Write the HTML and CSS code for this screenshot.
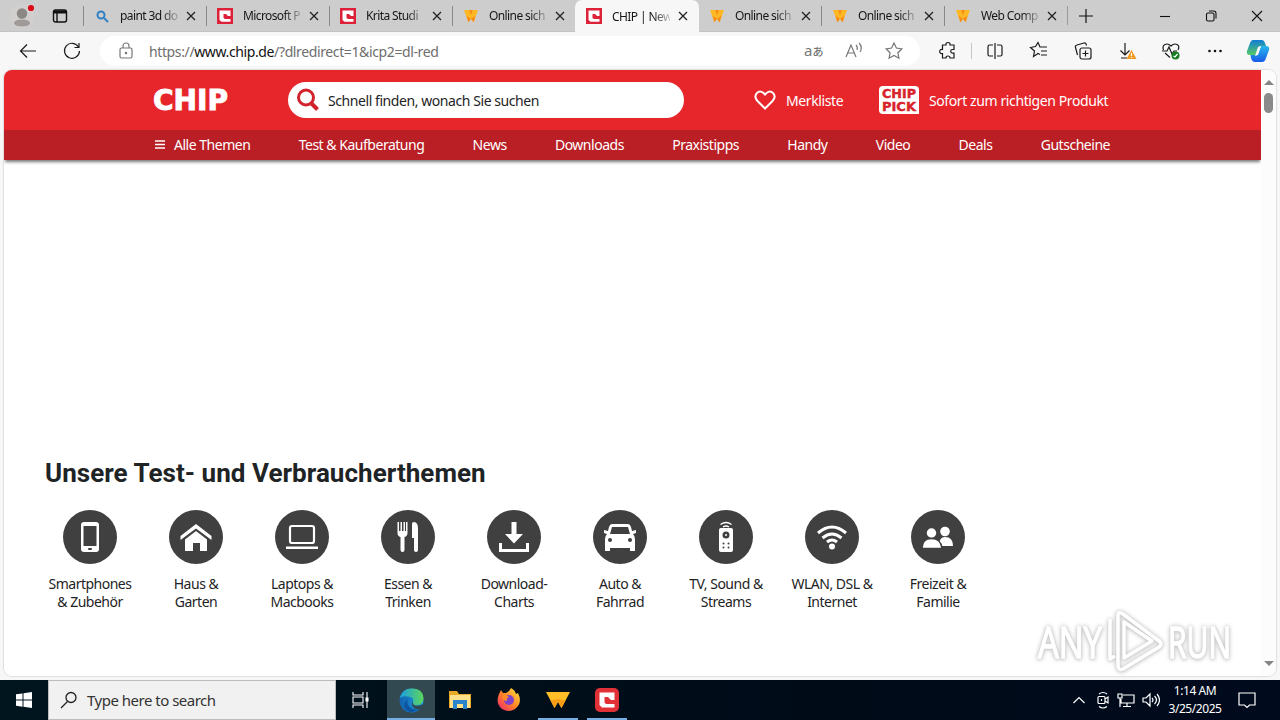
FILE: index.html
```html
<!DOCTYPE html>
<html lang="de">
<head>
<meta charset="utf-8">
<title>CHIP | News</title>
<link rel="stylesheet" href="styles.css">
</head>
<body>
<svg class="defs" aria-hidden="true">
  <symbol id="chip" viewBox="0 0 16 16"><path fill="#dc2138" d="M0 0h16v16H0z"/><path fill="#fff" d="M2.500 2.500h11v5.500H11L9 6H6.500v4L8 11h5.500v2.700H4.500L2.500 12z"/></symbol>
  <symbol id="wolf" viewBox="0 0 16 16"><path fill="#ffb824" d="M0 1h16l-5 14-3-4-3 4z"/><path fill="#f68b16" d="M3 8l2 7 3-4zM13 8l-2 7-3-4zM6 1h4L8 7z"/></symbol>
  <symbol id="close" viewBox="0 0 12 12"><path d="M2 2l8 8M10 2l-8 8" stroke="#222" stroke-width="1.300"/></symbol>
</svg>
<div class="browser">
  <header class="tabs">
    <div class="tools">
      <svg width="26" height="26" viewBox="0 0 26 26"><circle cx="13" cy="13" r="12" fill="#d2d0cf"/><circle cx="13" cy="10.500" r="5.200" fill="#8b8785"/><path d="M5 20.500q0-4 8-4t8 4q-1 3-8 3t-8-3z" fill="#a09b98"/><circle cx="22" cy="5" r="3.100" fill="#dc0a17"/></svg>
      <svg width="16" height="16" viewBox="0 0 16 16" fill="none" stroke="#111" stroke-width="1.400"><rect x="1.500" y="2" width="13" height="12" rx="2"/><path d="M2 4h12" stroke-width="3"/><path d="M5 4v10"/></svg>
    </div>
    <div class="tab"><svg class="fav" viewBox="0 0 16 16" fill="none" stroke="#3280c4" stroke-width="2"><circle cx="7" cy="7" r="3.500"/><path d="M10 10l4 4"/></svg><span>paint 3d do</span><svg class="x"><use href="#close"/></svg></div>
    <div class="tab"><svg class="fav"><use href="#chip"/></svg><span>Microsoft P</span><svg class="x"><use href="#close"/></svg></div>
    <div class="tab"><svg class="fav"><use href="#chip"/></svg><span>Krita Studi</span><svg class="x"><use href="#close"/></svg></div>
    <div class="tab before"><svg class="fav small"><use href="#wolf"/></svg><span>Online sich</span><svg class="x"><use href="#close"/></svg></div>
    <div class="tab active"><svg class="fav"><use href="#chip"/></svg><span>CHIP | New</span><svg class="x"><use href="#close"/></svg></div>
    <div class="tab after"><svg class="fav small"><use href="#wolf"/></svg><span>Online sich</span><svg class="x"><use href="#close"/></svg></div>
    <div class="tab"><svg class="fav small"><use href="#wolf"/></svg><span>Online sich</span><svg class="x"><use href="#close"/></svg></div>
    <div class="tab"><svg class="fav small"><use href="#wolf"/></svg><span>Web Comp</span><svg class="x"><use href="#close"/></svg></div>
    <div class="newtab"><svg width="14" height="14" viewBox="0 0 14 14" stroke="#111" stroke-width="1.200"><path d="M7 0v14M0 7h14"/></svg></div>
    <div class="window">
      <svg viewBox="0 0 12 12"><path d="M1 6.500h10"/></svg>
      <svg viewBox="0 0 12 12"><rect x="1.500" y="3" width="7.500" height="8" rx="1.500"/><path d="M4 1h4.500Q11 1 11 3.500V8.500"/></svg>
      <svg viewBox="0 0 12 12"><path d="M1 1l10 10M11 1L1 11"/></svg>
    </div>
  </header>
  <div class="toolbar">
    <div class="navicons">
      <svg class="ic" viewBox="0 0 20 20"><path d="M18 10H2.500M9 3.500L2.500 10 9 16.500"/></svg>
      <svg class="ic" viewBox="0 0 20 20"><path d="M16.500 6A7.500 7.500 0 1 0 17.500 10M17 2v4.500h-4.500"/></svg>
    </div>
    <div class="address">
      <svg class="ic gray lock" viewBox="0 0 20 20"><rect x="4" y="7" width="12" height="10" rx="1.500"/><path d="M7 7V5a3 3 0 0 1 6 0v2"/><circle cx="10" cy="12" r=".7"/></svg>
      <div class="url">https://<b>www.chip.de</b>/?dlredirect=1&amp;icp2=dl-red</div>
      <div class="addricons">
        <div class="trans">a<small>あ</small></div>
        <svg class="ic gray" viewBox="0 0 20 20"><path d="M2 16L7 4l5 12M4 12h6M12 4q2 2 1 5M15 2q4 4 1 9"/></svg>
        <svg class="ic gray" viewBox="0 0 20 20"><path d="M10 2l2.400 5 5.500.8-4 3.900 1 5.500-4.900-2.700-4.900 2.700 1-5.500-4-3.900 5.500-.8z"/></svg>
      </div>
    </div>
    <div class="actions">
      <svg class="ic" viewBox="0 0 20 20"><path d="M4.500 4H8q-.4-2.500 2-2.500T12 4h4v4.500h-1.500a1.800 1.800 0 0 0 0 3.600H16V17h-4q0-2-2-2t-2 2H4.500v-4.500q-2.800.3-2.800-2t2.800-2z"/></svg>
      <i class="divider"></i>
      <svg class="ic" viewBox="0 0 20 20"><path d="M8 4H4.500Q3 4 3 5.500v8Q3 15 4.500 15H8M10 2v16M12 4h3.500Q17 4 17 5.500v8q0 1.500-1.500 1.500H12"/></svg>
      <svg class="ic" viewBox="0 0 20 20"><path d="M11 13.500l-2-1-4.500 3 1-5.500-4-3.500 5-1L9 1.500 11 6h7M12 10h6M12 14h6"/></svg>
      <svg class="ic" viewBox="0 0 20 20"><rect x="7" y="7" width="11" height="11" rx="2"/><path d="M12.500 9.500v6M9.500 12.500h6M4.500 14L2.500 6.500Q2 4.500 4 4l7-2q2-.5 2.500 2.500"/></svg>
      <svg class="ic" viewBox="0 0 20 20"><path d="M8 2v12M3.500 9.500L8 14l4.500-4.500M4 17h6"/><path d="M14.500 9l5 9h-10z" fill="#f39a1e" stroke="none"/><path d="M14.500 12v3M14.500 16v1" stroke="#fff"/></svg>
      <svg class="ic" viewBox="0 0 20 20"><path d="M2.500 9Q1 5 4 3.500T10 5q3-3 6-1.500T17 9M1 10h5l2-4 3 7 2-3h3M4 12l5 4.500"/><circle cx="14.500" cy="14.500" r="4" fill="#1a7b25" stroke="none"/><path d="M12.500 15l1.500 1 2.500-3" stroke="#fff"/></svg>
      <svg class="ic" viewBox="0 0 20 20"><g fill="#111" stroke="none"><circle cx="4.500" cy="10" r="1.300"/><circle cx="10" cy="10" r="1.300"/><circle cx="15.500" cy="10" r="1.300"/></g></svg>
    </div>
    <svg class="copilot" viewBox="0 0 24 24"><defs><linearGradient id="cp1" x2="0" y2="1"><stop stop-color="#117cd5"/><stop offset="1" stop-color="#57cb65"/></linearGradient><linearGradient id="cp2" x2="0" y2="1"><stop stop-color="#29b8ed"/><stop offset="1" stop-color="#175be8"/></linearGradient></defs><path fill="url(#cp1)" d="M7 1h9q2 0 3 3l1 3h-5q-2 0-3 3l-2 6H4q-4 0-3-4L4 4q1-3 3-3z"/><path fill="url(#cp2)" d="M15 7h5q4 0 3 4l-3 8q-1 4-4 4H9q-3 0-4-4l-.5-3H10q2 0 3-4z"/><path d="M12 8l3-1-3 9-3 1z" fill="#f7f7f7"/></svg>
  </div>
  <main class="view">
    <div class="page">
      <div class="top">
        <svg class="logo" viewBox="0 0 76 22"><text x="0" y="20.500" textLength="75" lengthAdjust="spacingAndGlyphs">CHIP</text></svg>
        <div class="search"><svg viewBox="0 0 24 24"><circle cx="10" cy="9.500" r="7.500"/><path d="M15.500 15.500l6 6" stroke-width="4"/></svg><span>Schnell finden, wonach Sie suchen</span></div>
        <div class="merk"><svg viewBox="0 0 22 20"><path d="M11 18.500L3.500 11Q-.5 6.500 3 3t8 1.500Q15.500-.5 19 3t-.5 8z"/></svg><span>Merkliste</span></div>
        <div class="pick"><svg viewBox="0 0 40 28"><path d="M4 0h32q4 0 4 4v24H4q-4 0-4-4V4q0-4 4-4z" fill="#fff"/><text x="3" y="12.400" textLength="34" lengthAdjust="spacingAndGlyphs">CHIP</text><text x="3" y="24.600" textLength="34" lengthAdjust="spacingAndGlyphs">PICK</text></svg><span>Sofort zum richtigen Produkt</span></div>
      </div>
      <nav class="menu">
        <a><svg viewBox="0 0 10 9"><path d="M0 1h10M0 4.500h10M0 8h10" stroke="#fff" stroke-width="1.400"/></svg>Alle Themen</a><a>Test &amp; Kaufberatung</a><a>News</a><a>Downloads</a><a>Praxistipps</a><a>Handy</a><a>Video</a><a>Deals</a><a>Gutscheine</a>
      </nav>
      <section class="themes">
        <h1>Unsere Test- und Verbraucherthemen</h1>
        <div class="cats">
          <div class="cat"><svg viewBox="0 0 54 54"><rect x="18" y="12" width="18" height="30" rx="3"/><path class="d" d="M20.500 16h13v20h-13z"/><rect class="d" x="25" y="38" width="4" height="2" rx="1"/></svg><p>Smartphones<br>&amp; Zubehör</p></div>
          <div class="cat"><svg viewBox="0 0 54 54"><path d="M27 14l15.500 12v4L27 18.500 11.500 30v-4z"/><path d="M27 21l11 8.500V41h-7v-8h-7v8h-8V29.500z"/></svg><p>Haus &amp;<br>Garten</p></div>
          <div class="cat"><svg viewBox="0 0 54 54"><rect x="15" y="16" width="24" height="17" rx="2" fill="none" stroke="#fff" stroke-width="2.200"/><path d="M11 36.500h32V39H11z"/></svg><p>Laptops &amp;<br>Macbooks</p></div>
          <div class="cat"><svg viewBox="0 0 54 54"><path d="M16.500 12H18v9h1.500v-9h1.500v9h1.500v-9H24v9h1v-9h1.500v11q0 3-3 4v13q0 2-2 2t-2-2V27q-3-1-3-4zM31 14q0-2 2-2 4 0 4 7v21q0 2-2 2t-2-2V28h-2z"/></svg><p>Essen &amp;<br>Trinken</p></div>
          <div class="cat"><svg viewBox="0 0 54 54"><path d="M24.500 12h5v12H36l-9 9.500L18 24h6.500zM12 33h3v6h24v-6h3v9H12z"/></svg><p>Download-<br>Charts</p></div>
          <div class="cat"><svg viewBox="0 0 54 54"><path d="M19 14h16q2 0 3 3l1 4 4-1v3l-3 1q2 2 2 5v12h-5v-3H17v3h-5V29q0-3 2-5l-3-1v-3l4 1 1-4q1-3 3-3z"/><path class="d" d="M19 17h16l2 7H17z"/><circle class="d" cx="17" cy="30" r="2"/><circle class="d" cx="37" cy="30" r="2"/></svg><p>Auto &amp;<br>Fahrrad</p></div>
          <div class="cat"><svg viewBox="0 0 54 54"><rect x="20" y="18" width="14" height="24" rx="2"/><path d="M21.500 14.500q5.500-4 11 0M24 17q3-2 6 0" fill="none" stroke="#fff" stroke-width="1.300"/><circle class="d" cx="27" cy="25" r="3.500"/><circle cx="27" cy="25" r="1"/><g class="d"><circle cx="24.500" cy="33.500" r="1"/><circle cx="29.500" cy="33.500" r="1"/><circle cx="24.500" cy="37.500" r="1"/><circle cx="29.500" cy="37.500" r="1"/></g></svg><p>TV, Sound &amp;<br>Streams</p></div>
          <div class="cat"><svg viewBox="0 0 54 54"><path d="M13 23q14-12 28 0M17.500 28q9.500-8 19 0M22 32q5-4 10 0" fill="none" stroke="#fff" stroke-width="3"/><circle cx="27" cy="36.500" r="3"/></svg><p>WLAN, DSL &amp;<br>Internet</p></div>
          <div class="cat"><svg viewBox="0 0 54 54"><circle cx="34" cy="21.500" r="4.800"/><path d="M28 36q0-9 6-9 8 0 8 9z"/><g stroke="#404040" stroke-width="1.500"><circle cx="20.500" cy="23" r="5.500"/><path d="M11 38.500q0-10 9.500-10T31 38.500z"/></g></svg><p>Freizeit &amp;<br>Familie</p></div>
        </div>
      </section>
    </div>
    <div class="scroll"><svg width="10" height="6" viewBox="0 0 10 6"><path d="M0 6l5-5 5 5z" fill="#858585"/></svg><i></i><svg class="down" width="10" height="6" viewBox="0 0 10 6"><path d="M0 0l5 5 5-5z" fill="#858585"/></svg></div>
  </main>
  <svg class="mark" viewBox="0 0 210 70"><g class="word"><text x="8" y="53" textLength="64" lengthAdjust="spacingAndGlyphs">ANY</text><text x="138" y="53" textLength="63" lengthAdjust="spacingAndGlyphs">RUN</text></g><g fill="none" stroke="#fff" stroke-width="3.500" stroke-linejoin="round"><path d="M80 14v40l5-3M88 10v50q0 6 5 4l36-22q4-3 0-6L93 9q-5-3-5 1zM94 17v36l28-17z"/></g></svg>
</div>
<footer class="taskbar">
  <div class="start"><svg width="16" height="16" viewBox="0 0 16 16"><path fill="#fff" d="M0 2.300L6.500 1.400V7.500H0zM7.500 1.200L16 0v7.500H7.500zM0 8.500h6.500v6.200L0 13.800zM7.500 8.500H16V16l-8.500-1.200z"/></svg></div>
  <div class="find"><svg width="18" height="18" viewBox="0 0 18 18" fill="none" stroke="#222" stroke-width="1.300"><circle cx="11" cy="6.500" r="5"/><path d="M7.500 10.500L1 17"/></svg><span>Type here to search</span></div>
  <div class="app view-app"><svg width="18" height="18" viewBox="0 0 18 18" fill="none" stroke="#fff" stroke-width="1.100"><path d="M2 1v3h10V1M2 17v-3h10v3M2 6h10v6H2zM16 1v16M15 7h2v3h-2z"/></svg></div>
  <div class="app open on"><svg width="25" height="25" viewBox="0 0 24 24"><defs><linearGradient id="e1"><stop stop-color="#1b9de2"/><stop offset="1" stop-color="#5bd65c"/></linearGradient><linearGradient id="e2"><stop stop-color="#1263ad"/><stop offset="1" stop-color="#1d9ee5"/></linearGradient></defs><circle cx="12" cy="12" r="11.500" fill="url(#e2)"/><path d="M.6 10Q3 .5 12 .5q11 0 11.500 9 0 7-7 7-4 0-3-3 1-4-3.500-5Q4 7 .6 10z" fill="url(#e1)"/><path d="M9 10q-3 5 2 9 5 3 9 1-5 5-12 2Q1 17 9 10z" fill="#0d55a0"/><path d="M13.500 13q-1 4 4 4 3 0 6.500-2v5l-3 .5q-7 .5-8.500-4-.5-2 1-3.500z" fill="#334952"/></svg></div>
  <div class="app"><svg width="22" height="20" viewBox="0 0 22 20"><path fill="#e8a928" d="M0 1h8l2 3h12v14H0z"/><path fill="#ffe08a" d="M1 5h20v13H1z"/><path fill="#2983cd" d="M4 10h14v9h-4v-5H8v5H4z"/></svg></div>
  <div class="app"><svg width="24" height="24" viewBox="0 0 24 24"><defs><linearGradient id="ff" x1="1" x2="0" y2="1"><stop stop-color="#ffe944"/><stop offset=".5" stop-color="#ff8525"/><stop offset="1" stop-color="#ed1f77"/></linearGradient></defs><path fill="url(#ff)" d="M2 6l2-4 2 3h3l3-2 2-3q4 2 5 6l2-1q5 10-3 16-6 4-13 0Q-2 15 2 6z"/><circle cx="12" cy="12" r="5" fill="#8142ca"/><path d="M5 8q4-2 7 1-3 1-2 4-4 0-5-5z" fill="#ff8d25"/></svg></div>
  <div class="app open"><svg width="24" height="20" viewBox="0 0 24 20"><path fill="#ffbd27" d="M0 2h24l-8.500 16-3.500-6-3.500 6z"/><path d="M4.500 10.500L12 9l7.500 1.500-4 7.500-3.500-6-3.500 6z" fill="#f99d16"/></svg></div>
  <div class="app open"><svg width="24" height="24" viewBox="0 0 24 24"><rect width="24" height="24" rx="5" fill="#e23136"/><path fill="#fff" d="M4.500 4.500h15V12H16l-3-3H9.500v5.500L11 16h8.500v3.500H7L4.500 17z"/></svg></div>
  <div class="tray">
    <svg width="12" height="18" viewBox="0 0 12 18"><path d="M.5 12L6 6.500l5.500 5.500"/></svg>
    <svg class="cam" width="14" height="18" viewBox="0 0 14 18"><rect x="2" y="5.500" width="7" height="7" rx="1"/><path d="M9 8l3-2v6l-3-2M3 3q4-3 8 0M3 15.500q4 3 8 0M5.500 8v2"/></svg>
    <svg width="18" height="18" viewBox="0 0 18 18"><path d="M6 4h11v8H4V8M10 12v3M6 15.500h8M1 3h4v4H1zM3 7v9"/></svg>
    <svg width="18" height="18" viewBox="0 0 18 18"><path d="M1 7h3l4-4v12l-4-4H1zM10 7q2 2 0 4M12.500 5q4 4 0 8M15 3q5 6 0 12"/></svg>
    <div class="clock">1:14 AM<br>3/25/2025</div>
    <svg class="note" width="18" height="18" viewBox="0 0 18 18"><path d="M1 2h16v12h-5.500L9 16.500 6.500 14H1z"/></svg>
  </div>
</footer>
</body>
</html>
```
FILE: styles.css
```css
* { box-sizing: border-box; }
body { margin: 0; width: 1280px; height: 720px; overflow: hidden; font-family: "Noto Sans", "Noto Sans CJK JP", sans-serif; display: flex; flex-direction: column; }
svg { display: block; flex: none; }
.defs { position: absolute; width: 0; height: 0; }
.browser { position: relative; height: 680px; background: #f7f7f7; display: flex; flex-direction: column; }
.tabs { height: 32px; flex: none; background: #cdcdcd; display: flex; border-bottom: 1px solid #c3c3c3; }
.tools { width: 83px; display: flex; align-items: center; padding-left: 9px; gap: 17px; }
.tab { width: 123px; flex: none; display: flex; align-items: center; padding-left: 11px; position: relative; font-size: 12px; letter-spacing: -.6px; color: #161616; }
.tab::before { content: ""; position: absolute; left: 0; top: 6px; width: 1px; height: 20px; background: #898989; }
.tab.active::before, .tab.after::before { display: none; }
.tab span { width: 58px; margin-left: 10px; white-space: nowrap; -webkit-mask-image: linear-gradient(90deg, #000 70%, #0003); mask-image: linear-gradient(90deg, #000 70%, #0003); }
.fav { width: 16px; height: 16px; }
.fav.small { width: 14px; height: 14px; margin: 0 1px; }
.x { width: 12px; height: 12px; margin-left: 7px; }
.tab.active { width: 124px; height: 32px; background: #f7f7f7; border-radius: 7px 7px 0 0; }
.tab.after { width: 122px; padding-left: 10px; }
.newtab { width: 36px; display: flex; align-items: center; justify-content: center; border-left: 1px solid #999; margin: 6px 0; }
.window { margin-left: auto; display: flex; align-items: center; gap: 34px; padding-right: 17px; }
.window svg { width: 12px; height: 12px; fill: none; stroke: #111; stroke-width: 1.100; }
.toolbar { height: 38px; flex: none; display: flex; align-items: center; }
.ic { width: 20px; height: 20px; fill: none; stroke: #1b1b1b; stroke-width: 1.200; }
.gray { stroke: #777; }
.navicons { width: 100px; display: flex; gap: 24px; padding-left: 18px; }
.address { width: 820px; height: 30px; background: #fff; border-radius: 15px; display: flex; align-items: center; padding: 0 16px; }
.url { margin-left: 13px; font-size: 14px; color: #6e6e6e; letter-spacing: -.38px; }
.url b { color: #111; font-weight: 400; }
.addricons { margin-left: auto; display: flex; gap: 20px; align-items: center; }
.trans { width: 20px; color: #777; font-size: 15px; line-height: 18px; white-space: nowrap; display: flex; align-items: baseline; }
.trans small { font-size: 11px; font-weight: 500; }
.actions { display: flex; align-items: center; gap: 24px; padding-left: 18px; }
.divider { width: 1px; height: 16px; background: #c7c7c7; margin: 0 -11px; }
.copilot { width: 24px; height: 24px; margin-left: 21px; }
.view { width: 1272px; height: 606px; margin-left: 4px; background: #fff; border-radius: 8px; overflow: hidden; display: flex; box-shadow: 0 0 1px 1px #dfdfdf; }
.page { width: 1257px; color: #1e2425; }
.top { height: 60px; background: #e7262c; color: #fff; display: flex; align-items: center; padding-left: 149px; font-size: 14px; white-space: nowrap; letter-spacing: -.4px; }
.logo { width: 76px; height: 22px; letter-spacing: 0; overflow: visible; }
.logo text { font: 700 27.500px "DejaVu Sans", sans-serif; fill: #fff; stroke: #fff; stroke-width: .9; }
.search { width: 396px; height: 36px; margin-left: 59px; border-radius: 18px; background: #fff; color: #1e2425; display: flex; align-items: center; gap: 8px; padding-left: 8px; }
.search svg { width: 24px; height: 24px; fill: none; stroke: #d2232c; stroke-width: 3; }
.search span { letter-spacing: -.43px; }
.merk { display: flex; align-items: center; gap: 10px; width: 125px; margin-left: 70px; }
.merk svg { width: 22px; height: 20px; fill: none; stroke: #fff; stroke-width: 2; }
.pick { display: flex; align-items: center; gap: 10px; }
.pick svg { width: 40px; height: 28px; letter-spacing: 0; }
.pick text { font: 700 12px/12px "DejaVu Sans", sans-serif; fill: #d8222c; stroke: #d8222c; stroke-width: .4; }
.menu { height: 30px; background: #ba1f26; color: #fff; display: flex; align-items: center; justify-content: space-between; padding: 0 151px 1px; font-size: 14px; letter-spacing: -.48px; box-shadow: 0 3px 3px -1px #0008; white-space: nowrap; }
.menu a { display: flex; align-items: center; }
.menu svg { width: 10px; height: 9px; margin-right: 9px; }
.themes { padding: 292px 0 0 33px; }
.themes h1 { margin: 0 0 0 8px; font-family: Roboto, sans-serif; font-size: 26px; line-height: 42px; font-weight: 700; letter-spacing: .04px; white-space: nowrap; }
.cats { display: flex; margin-top: 16px; }
.cat { width: 106px; display: flex; flex-direction: column; align-items: center; text-align: center; font-size: 14px; line-height: 18px; }
.cat svg { width: 54px; height: 54px; border-radius: 50%; background: #404040; fill: #fff; }
.cat .d { fill: #404040; }
.cat p { margin: 11px 0 0; white-space: nowrap; letter-spacing: -.5px; }
.scroll { width: 15px; background: #fcfcfc; display: flex; flex-direction: column; align-items: center; padding: 9px 0; }
.scroll i { width: 9px; height: 20px; border-radius: 5px; background: #8a8a8a; margin-top: 8px; }
.scroll .down { margin-top: auto; }
.mark { position: absolute; left: 1030px; top: 605px; width: 210px; height: 70px; overflow: visible; opacity: .7; filter: drop-shadow(0 0 2px #aaa) drop-shadow(0 1px 1px #ccc); }
.word { font: 400 43px "Open Sans", sans-serif; fill: #fff; stroke: #fff; stroke-width: 1.500; }
.taskbar { height: 40px; background: linear-gradient(90deg, #00151e, #000b18 65%, #000a1d); display: flex; color: #fff; }
.start, .app { width: 48px; display: flex; align-items: center; justify-content: center; }
.find { width: 288px; background: #f1f1f1; border: 1px solid #bcbcbc; display: flex; align-items: center; gap: 9px; padding-left: 11px; font-size: 15px; color: #333; letter-spacing: -.5px; }
.app { margin-right: 1px; }
.app.view-app { margin-right: 3px; }
.app.open { box-shadow: inset 0 -2px #76aee2; border: solid transparent; border-width: 0 4px; background-clip: padding-box; }
.app.on { background: #334952; border: 0; }
.tray { margin-left: auto; display: flex; align-items: center; gap: 7px; padding-right: 24px; }
.tray svg { fill: none; stroke: #fff; stroke-width: 1.200; }
.tray .cam { margin-left: 4px; }
.clock { width: 56px; font-size: 12px; line-height: 18px; text-align: center; letter-spacing: -.45px; white-space: nowrap; }
.note { margin-left: 8px; }
```
